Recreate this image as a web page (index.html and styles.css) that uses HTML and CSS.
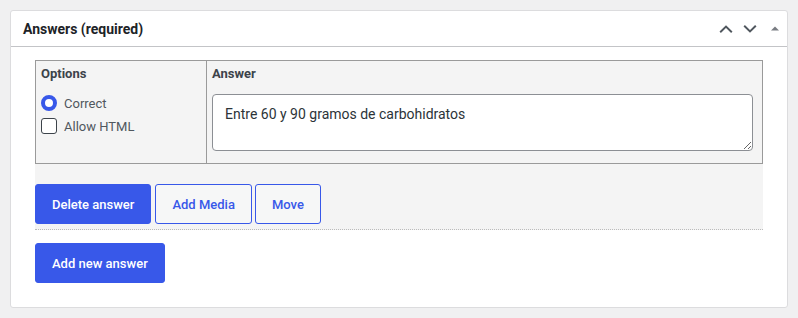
FILE: index.html
```html
<!DOCTYPE html>
<html>
<head>
<meta charset="utf-8">
<link rel="stylesheet" href="styles.css">
</head>
<body>
<div class="panel">
  <div class="panel-header">
    <h2 class="panel-title">Answers (required)</h2>
    <div class="panel-actions">
      <svg class="icon-chev" width="14" height="8" viewBox="0 0 14 8"><path d="M1.2 7.2 L7 1.6 L12.8 7.2" fill="none" stroke="#50575e" stroke-width="2"/></svg>
      <svg class="icon-chev down" width="14" height="8" viewBox="0 0 14 8"><path d="M1.2 0.8 L7 6.4 L12.8 0.8" fill="none" stroke="#50575e" stroke-width="2"/></svg>
      <svg class="icon-tri" width="8" height="5" viewBox="0 0 8 5"><polygon points="0,4.5 4,0.5 8,4.5" fill="#787c82"/></svg>
    </div>
  </div>
  <div class="panel-inside">
    <div class="answer-block">
      <div class="answer-table">
        <div class="cell cell-options">
          <div class="cell-label">Options</div>
          <label class="opt-row"><input type="radio" class="radio" checked> <span>Correct</span></label>
          <label class="opt-row"><input type="checkbox" class="check"> <span>Allow HTML</span></label>
        </div>
        <div class="cell cell-answer">
          <div class="cell-label">Answer</div>
          <textarea class="answer-text">Entre 60 y 90 gramos de carbohidratos</textarea>
        </div>
      </div>
      <div class="btn-row">
        <button class="btn btn-primary btn-delete">Delete answer</button>
        <button class="btn btn-secondary">Add Media</button>
        <button class="btn btn-secondary">Move</button>
      </div>
    </div>
    <button class="btn btn-primary btn-add">Add new answer</button>
  </div>
</div>
</body>
</html>
```
FILE: styles.css
```css
* { box-sizing: border-box; }
html, body { margin: 0; padding: 0; }
body {
  background: #f0f0f1;
  font-family: Roboto, "Liberation Sans", sans-serif;
  font-size: 13px;
  color: #3c434a;
  padding: 10px;
}
.panel {
  background: #fff;
  border: 1px solid #dcdcde;
  border-radius: 3px;
  width: 778px;
}
.panel-header {
  height: 36px;
  border-bottom: 1px solid #c3c4c7;
  display: flex;
  align-items: center;
  padding: 0 8px 0 12px;
}
.panel-title {
  margin: 0;
  font-size: 14px;
  font-weight: 700;
  color: #1d2327;
  flex: 1;
  line-height: 1;
}
.panel-actions {
  display: flex;
  align-items: center;
}
.icon-chev { display: block; }
.icon-chev.down { margin-left: 10px; }
.icon-tri { display: block; margin-left: 14px; }
.panel-inside {
  padding: 13px 24px 24px 24px;
}
.answer-block {
  background: #f4f4f4;
  border-bottom: 1px dotted #bbb;
  padding-bottom: 5px;
}
.answer-table {
  display: grid;
  grid-template-columns: 170px 1fr;
  border: 1px solid #9a9a9a;
}
.cell { padding: 5px 10px 12px 5px; }
.cell-answer { border-left: 1px solid #9a9a9a; }
.cell-label {
  font-weight: 700;
  color: #3c434a;
  line-height: 16px;
}
.cell-options .cell-label { margin-bottom: 10px; }
.opt-row {
  display: flex;
  align-items: center;
  height: 22px;
  margin-bottom: 1px;
  color: #50575e;
}
.opt-row span { margin-left: 7px; }
.radio, .check {
  appearance: none;
  -webkit-appearance: none;
  margin: 0;
  width: 16px;
  height: 16px;
  background: #fff;
  flex: none;
}
.radio {
  border-radius: 50%;
  border: 4.5px solid #3858e9;
}
.check {
  border: 1px solid #3c434a;
  border-radius: 3px;
}
.answer-text {
  display: block;
  margin-top: 12px;
  width: 541px;
  height: 57px;
  border: 1px solid #8c8f94;
  border-radius: 4px;
  padding: 9px 12px;
  font-family: Roboto, "Liberation Sans", sans-serif;
  font-size: 14px;
  line-height: 20px;
  color: #2c3338;
  background: #fff;
}
.btn-row {
  display: flex;
  gap: 3px;
  margin-top: 20px;
}
.btn {
  height: 40px;
  padding: 0 16px;
  font-family: Roboto, "Liberation Sans", sans-serif;
  font-size: 13px;
  font-weight: 500;
  border-radius: 3px;
  border: 1px solid #3858e9;
  cursor: pointer;
}
.btn-delete { margin-right: 1px; }
.btn-primary {
  background: #3858e9;
  color: #fff;
}
.btn-secondary {
  background: #f6f7f7;
  color: #3858e9;
}
.btn-add {
  display: block;
  margin-top: 13px;
}
```
